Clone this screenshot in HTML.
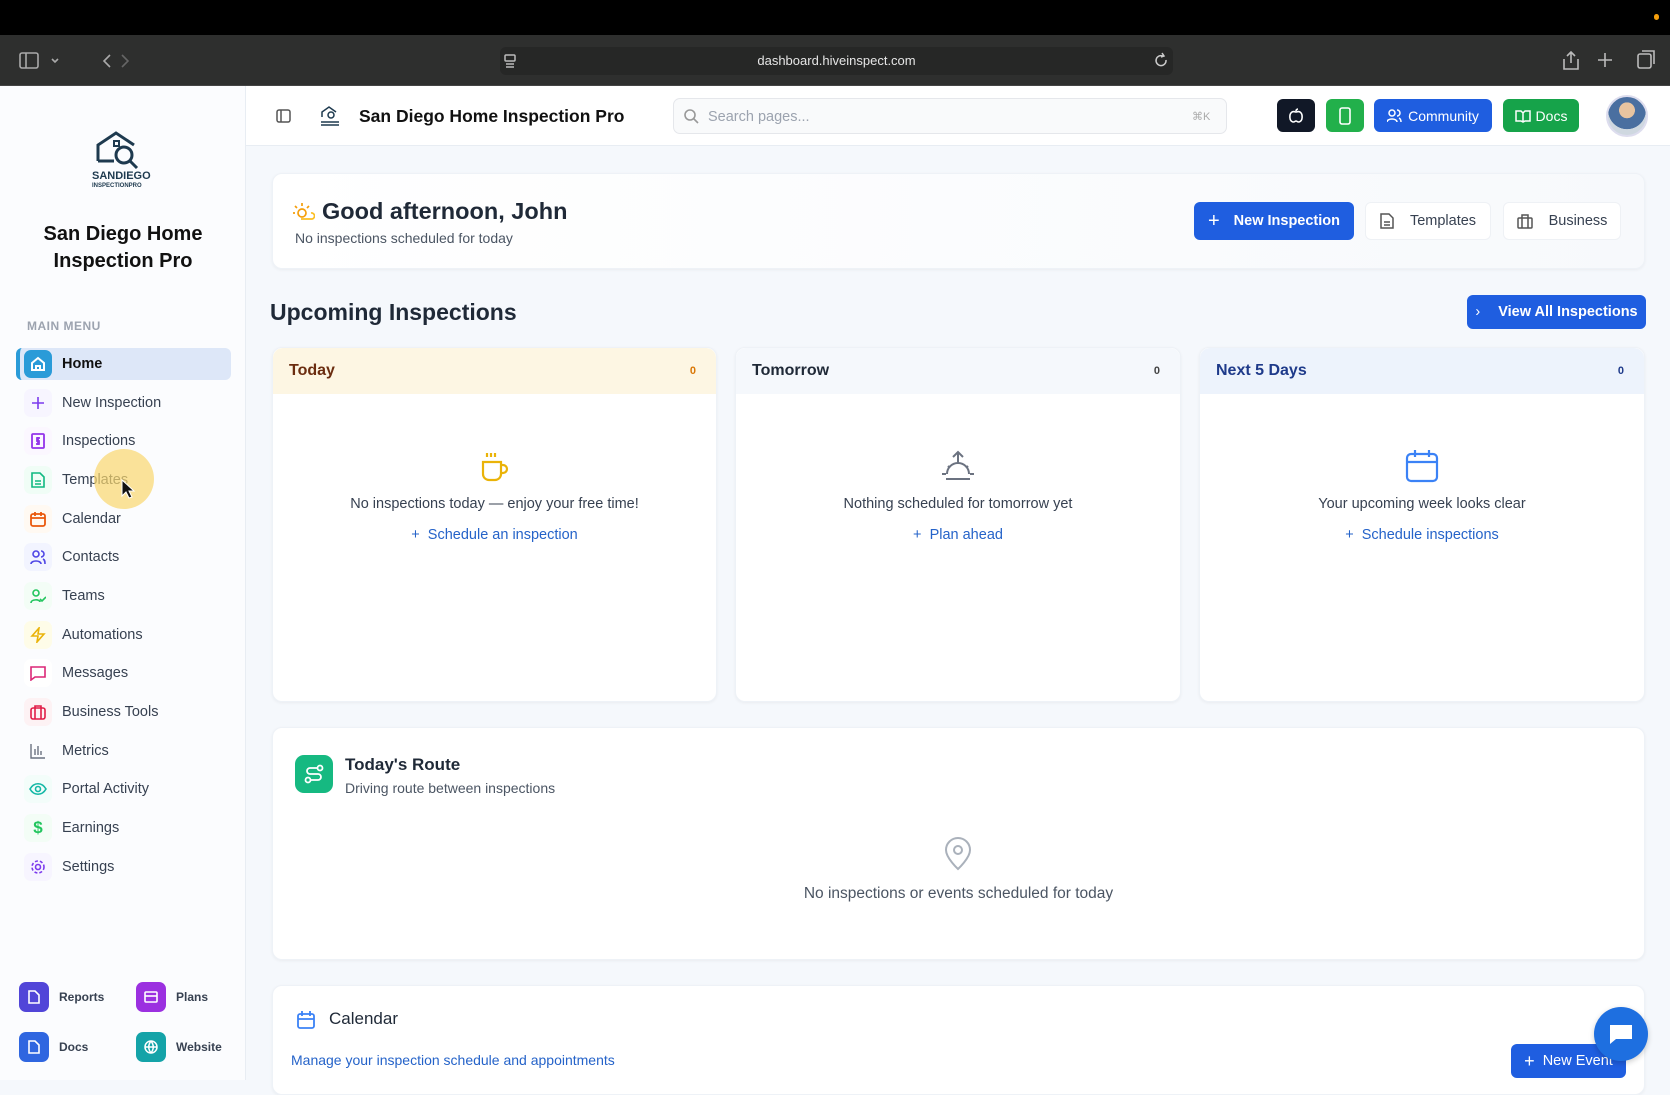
<!DOCTYPE html>
<html><head><meta charset="utf-8"><style>
*{box-sizing:border-box;margin:0;padding:0}
body{width:1670px;height:1080px;overflow:hidden;font-family:"Liberation Sans",sans-serif;background:#f5f8fc;position:relative;color:#1f2937}
.a{position:absolute}
.top{left:0;top:0;width:1670px;height:35px;background:#000}
.bar{left:0;top:35px;width:1670px;height:51px;background:#2e2f2e;border-bottom:1px solid #444}
.url{left:500px;top:47px;width:673px;height:28px;background:#262726;border-radius:6px;color:#e5e5e5;font-size:13px;text-align:center;line-height:28px}
.side{left:0;top:86px;width:246px;height:994px;background:#fbfcfe;border-right:1px solid #e8edf3}
.hdr{left:246px;top:86px;width:1424px;height:60px;background:#fff;border-bottom:1px solid #e8edf3}
.mi{left:24px;width:200px;height:34px;font-size:14.5px;color:#374151;display:flex;align-items:center}
.mi .ic{width:28px;height:28px;border-radius:7px;display:flex;align-items:center;justify-content:center;margin-right:10px}
.card{background:#fff;border-radius:10px;box-shadow:0 1px 3px rgba(0,0,0,.05);border:1px solid #eef2f7}
.btn{border-radius:6px;display:flex;align-items:center;justify-content:center;font-size:14.5px;font-weight:bold}
.blue{background:#1f5ee0;color:#fff}
.wbtn{background:#fff;color:#374151;font-weight:normal;border:1px solid #eef1f5}
.ch{height:46px;border-radius:10px 10px 0 0;display:flex;align-items:center;justify-content:space-between;padding:0 20px 0 16px;font-size:16px;font-weight:bold}
.cnt{font-size:11px;font-weight:bold}
.empty{position:absolute;width:100%;text-align:center}
.et{font-size:14.5px;color:#374151}
.el{font-size:14.5px;color:#2563c9;margin-top:15px}
.bb{width:30px;height:30px;border-radius:7px;display:flex;align-items:center;justify-content:center}
.bl{font-size:12px;font-weight:bold;color:#374151}
</style></head><body>
<div class="a top"></div>
<div class="a" style="left:1654px;top:14px;width:5px;height:6px;border-radius:3px;background:#f59e0b"></div>
<div class="a bar"></div>
<svg class="a" style="left:18px;top:50px" width="110" height="22" fill="none" stroke="#aaa" stroke-width="1.6"><rect x="2" y="3" width="18" height="15" rx="2"/><line x1="8" y1="3" x2="8" y2="18"/><path d="M34 9l3 3 3-3"/><path d="M92 5l-6 6 6 6"/></svg>
<svg class="a" style="left:118px;top:50px" width="20" height="22" fill="none" stroke="#666" stroke-width="1.6"><path d="M4 5l6 6-6 6"/></svg>
<div class="a url">dashboard.hiveinspect.com</div>
<svg class="a" style="left:503px;top:53px" width="14" height="16" fill="none" stroke="#bbb" stroke-width="1.5"><rect x="2" y="2" width="10" height="6" rx="1"/><line x1="3" y1="11" x2="11" y2="11"/><line x1="3" y1="14" x2="11" y2="14"/></svg>
<svg class="a" style="left:1154px;top:52px" width="16" height="18" fill="none" stroke="#ccc" stroke-width="1.5"><path d="M12 8a5 5 0 1 1-3-4"/><path d="M8 1l2 3-3 1"/></svg>
<svg class="a" style="left:1560px;top:48px" width="100" height="24" fill="none" stroke="#bbb" stroke-width="1.6"><path d="M11 4v11M7 8l4-4 4 4M4 11v10h14V11"/><path d="M45 5v14M38 12h14"/><rect x="78" y="6" width="13" height="14" rx="2"/><path d="M82 3h12v13"/></svg>

<div class="a side"></div>
<svg class="a" style="left:90px;top:131px" width="64" height="58" fill="none" stroke="#1e3a4f" stroke-width="3"><path d="M8 30V14L26 2l18 12"/><path d="M8 30h16"/><circle cx="34" cy="24" r="8"/><path d="M40 30l7 7"/><rect x="24" y="10" width="5" height="5" stroke-width="2"/><text x="2" y="48" font-size="11" font-weight="bold" fill="#1e3a4f" stroke="none" font-family="Liberation Sans">SANDIEGO</text><text x="2" y="56" font-size="6" font-weight="bold" fill="#1e3a4f" stroke="none" font-family="Liberation Sans">INSPECTIONPRO</text></svg>
<div class="a" style="left:0;top:221px;width:246px;text-align:center;font-size:20px;font-weight:bold;line-height:27px;color:#111">San Diego Home<br>Inspection Pro</div>
<div class="a" style="left:27px;top:319px;font-size:12px;font-weight:bold;color:#9ca3af;letter-spacing:.5px">MAIN MENU</div>
<div class="a" style="left:16px;top:348px;width:215px;height:32px;background:#dde7f8;border-radius:6px;border-left:4px solid #2a9bd8"></div>
<div class="a mi" style="top:347px"><div class="ic" style="background:#2a9bd8"><svg width="16" height="16" fill="none" stroke="#fff" stroke-width="2"><path d="M2 7l6-5 6 5v7H2z"/><path d="M6 14v-4h4v4"/></svg></div><b style="color:#111">Home</b></div>
<div class="a mi" style="top:386px"><div class="ic" style="background:#f7f5ff"><svg width="14" height="14" stroke="#7c3aed" stroke-width="1.6"><path d="M7 1v12M1 7h12"/></svg></div>New Inspection</div>
<div class="a mi" style="top:424px"><div class="ic" style="background:#fbf7ff"><svg width="14" height="16" fill="none" stroke="#9333ea" stroke-width="1.8"><rect x="1" y="1" width="12" height="14" rx="1"/><path d="M7 4v8M9 5H6v3h2v3H5"/></svg></div>Inspections</div>
<div class="a mi" style="top:463px"><div class="ic" style="background:#f0fdf6"><svg width="14" height="16" fill="none" stroke="#10b981" stroke-width="1.6"><path d="M1 1h8l4 4v10H1z"/><path d="M4 9h6M4 12h6"/></svg></div>Templates</div>
<div class="a" style="left:94px;top:449px;width:60px;height:60px;border-radius:50%;background:rgba(250,215,110,.7)"></div>
<svg class="a" style="left:120px;top:478px" width="16" height="22"><path d="M2 2v16l4-4 3 6 3-1-3-6h5z" fill="#111" stroke="#fff" stroke-width="1"/></svg>
<div class="a mi" style="top:502px"><div class="ic" style="background:#fff9f2"><svg width="16" height="16" fill="none" stroke="#ea580c" stroke-width="1.8"><rect x="1" y="3" width="14" height="12" rx="2"/><path d="M1 7h14M5 1v4M11 1v4"/></svg></div>Calendar</div>
<div class="a mi" style="top:540px"><div class="ic" style="background:#f2f4ff"><svg width="16" height="16" fill="none" stroke="#4f46e5" stroke-width="1.6"><circle cx="6" cy="5" r="3"/><path d="M1 15c0-4 10-4 10 0M11 2a3 3 0 0 1 0 6M13 10c2 1 2 3 2 5"/></svg></div>Contacts</div>
<div class="a mi" style="top:579px"><div class="ic" style="background:#f3fdf6"><svg width="16" height="16" fill="none" stroke="#22c55e" stroke-width="1.6"><circle cx="6" cy="5" r="3"/><path d="M1 15c0-4 9-4 9-1M10 11l2 2 4-4"/></svg></div>Teams</div>
<div class="a mi" style="top:618px"><div class="ic" style="background:#fefce8"><svg width="16" height="16" fill="none" stroke="#eab308" stroke-width="1.6"><path d="M9 1L2 9h6l-1 6 7-8H8z"/></svg></div>Automations</div>
<div class="a mi" style="top:656px"><div class="ic" style="background:#fff"><svg width="16" height="16" fill="none" stroke="#db2777" stroke-width="1.6"><path d="M1 2h14v10H5l-4 3z"/></svg></div>Messages</div>
<div class="a mi" style="top:695px"><div class="ic" style="background:#fdf2f4"><svg width="16" height="16" fill="none" stroke="#e11d48" stroke-width="1.6"><rect x="1" y="4" width="14" height="11" rx="2"/><path d="M5 4V2h6v2M5 4v11M11 4v11"/></svg></div>Business Tools</div>
<div class="a mi" style="top:734px"><div class="ic"><svg width="16" height="16" fill="none" stroke="#6b7280" stroke-width="1.4"><path d="M1 1v14h14M5 12V6M8 12V3M11 12V8"/></svg></div>Metrics</div>
<div class="a mi" style="top:772px"><div class="ic" style="background:#f3fdfa"><svg width="18" height="14" fill="none" stroke="#14b8a6" stroke-width="1.6"><path d="M1 7c4-7 12-7 16 0-4 7-12 7-16 0z"/><circle cx="9" cy="7" r="2.5"/></svg></div>Portal Activity</div>
<div class="a mi" style="top:811px"><div class="ic" style="background:#f3fdf6"><span style="color:#22c55e;font-weight:bold;font-size:17px">$</span></div>Earnings</div>
<div class="a mi" style="top:850px"><div class="ic" style="background:#f7f5ff"><svg width="16" height="16" fill="none" stroke="#7c3aed" stroke-width="1.6"><circle cx="8" cy="8" r="2.5"/><circle cx="8" cy="8" r="6" stroke-dasharray="3 2"/></svg></div>Settings</div>

<div class="a" style="left:19px;top:982px;display:flex;align-items:center;gap:10px"><div class="bb" style="background:#5145d8"><svg width="12" height="14" fill="none" stroke="#fff" stroke-width="1.6"><path d="M1 1h6l4 4v8H1z"/></svg></div><span class="bl">Reports</span></div>
<div class="a" style="left:136px;top:982px;display:flex;align-items:center;gap:10px"><div class="bb" style="background:#9b30e0"><svg width="14" height="12" fill="none" stroke="#fff" stroke-width="1.6"><rect x="1" y="1" width="12" height="10" rx="1"/><path d="M1 5h12"/></svg></div><span class="bl">Plans</span></div>
<div class="a" style="left:19px;top:1032px;display:flex;align-items:center;gap:10px"><div class="bb" style="background:#2f66e0"><svg width="12" height="14" fill="none" stroke="#fff" stroke-width="1.6"><path d="M1 1h6l4 4v8H1z"/></svg></div><span class="bl">Docs</span></div>
<div class="a" style="left:136px;top:1032px;display:flex;align-items:center;gap:10px"><div class="bb" style="background:#14a3a8"><svg width="14" height="14" fill="none" stroke="#fff" stroke-width="1.5"><circle cx="7" cy="7" r="6"/><path d="M1 7h12M7 1c-3 4-3 8 0 12M7 1c3 4 3 8 0 12"/></svg></div><span class="bl">Website</span></div>

<div class="a hdr"></div>
<svg class="a" style="left:276px;top:108px" width="16" height="16" fill="none" stroke="#555" stroke-width="1.5"><rect x="1" y="2" width="13" height="12" rx="2"/><path d="M5 2v12"/></svg>
<svg class="a" style="left:319px;top:106px" width="22" height="22" fill="none" stroke="#1e3a4f" stroke-width="1.5"><path d="M3 11V6l7-5 7 5"/><circle cx="12" cy="9" r="3"/><path d="M2 16h18M2 19h18"/></svg>
<div class="a" style="left:359px;top:106px;font-size:17.5px;font-weight:bold;color:#111">San Diego Home Inspection Pro</div>
<div class="a" style="left:673px;top:98px;width:554px;height:36px;border:1px solid #e5e7eb;border-radius:7px;background:#f9fafb"></div>
<svg class="a" style="left:683px;top:108px" width="16" height="16" fill="none" stroke="#999" stroke-width="1.6"><circle cx="7" cy="7" r="5"/><path d="M11 11l4 4"/></svg>
<div class="a" style="left:708px;top:109px;font-size:14.5px;color:#9ca3af">Search pages...</div>
<div class="a" style="left:1192px;top:110px;font-size:11px;color:#aaa">⌘K</div>
<div class="a btn" style="left:1277px;top:99px;width:38px;height:33px;background:#111827"><svg width="16" height="16" fill="none" stroke="#fff" stroke-width="1.6"><path d="M4 4c-3 2-3 9 1 10 2 0 2-1 3-1s1 1 3 1c4-1 4-8 1-10-2-1-3 0-4 0S6 3 4 4zM8 3c0-1 1-2 2-2"/></svg></div>
<div class="a btn" style="left:1326px;top:99px;width:38px;height:33px;background:#22b04b"><svg width="12" height="18" fill="none" stroke="#fff" stroke-width="1.6"><rect x="1" y="1" width="10" height="16" rx="2"/></svg></div>
<div class="a btn blue" style="left:1374px;top:99px;width:118px;height:33px;font-size:14px;font-weight:normal"><svg width="16" height="14" fill="none" stroke="#fff" stroke-width="1.5" style="margin-right:5px"><circle cx="5" cy="4" r="3"/><path d="M0 13c0-4 10-4 10 0M10 1a3 3 0 0 1 0 6M12 9c2 1 2 3 2 4"/></svg>Community</div>
<div class="a btn" style="left:1503px;top:99px;width:76px;height:33px;background:#16a34a;color:#fff;font-size:14px;font-weight:normal"><svg width="16" height="14" fill="none" stroke="#fff" stroke-width="1.5" style="margin-right:5px"><path d="M1 2h5l2 2 2-2h5v10h-5l-2 1-2-1H1zM8 4v9"/></svg>Docs</div>
<div class="a" style="left:1606px;top:95px;width:42px;height:42px;border-radius:50%;background:radial-gradient(circle at 50% 35%,#e8c4a0 0 25%,#4a6fa0 26% 60%,#cfd8e0 61%);border:2px solid #dde"></div>

<div class="a card" style="left:272px;top:173px;width:1373px;height:96px;background:linear-gradient(90deg,#fff,#f7f9fc)"></div>
<svg class="a" style="left:293px;top:200px" width="22" height="22" fill="none" stroke="#f59e0b" stroke-width="1.7"><circle cx="9" cy="13" r="4"/><path d="M9 3v3M2 13H0M4 8L2 6M14 8l2-2"/><path d="M8 19h11a3 3 0 0 0-1-6" stroke="#fbbf24"/></svg>
<div class="a" style="left:322px;top:198px;font-size:23.5px;font-weight:bold;color:#1f2937">Good afternoon, John</div>
<div class="a" style="left:295px;top:230px;font-size:14px;color:#4b5563">No inspections scheduled for today</div>
<div class="a btn blue" style="left:1194px;top:202px;width:160px;height:38px"><span style="font-weight:normal;font-size:20px;margin-right:14px">+</span>New Inspection</div>
<div class="a btn wbtn" style="left:1365px;top:202px;width:126px;height:38px"><svg width="14" height="16" fill="none" stroke="#555" stroke-width="1.5" style="margin-right:16px"><path d="M1 1h8l4 4v10H1z"/><path d="M4 9h6M4 12h6"/></svg>Templates</div>
<div class="a btn wbtn" style="left:1503px;top:202px;width:118px;height:38px"><svg width="16" height="15" fill="none" stroke="#555" stroke-width="1.5" style="margin-right:16px"><rect x="1" y="4" width="14" height="10" rx="1"/><path d="M5 4V1h6v3M5 4v10M11 4v10"/></svg>Business</div>

<div class="a" style="left:270px;top:299px;font-size:23px;font-weight:bold;color:#1f2937">Upcoming Inspections</div>
<div class="a btn blue" style="left:1467px;top:295px;width:179px;height:34px"><span style="font-weight:normal;margin-right:18px">›</span>View All Inspections</div>

<div class="a card" style="left:272px;top:347px;width:445px;height:355px">
<div class="ch" style="background:#fdf6e3;color:#6b2d10">Today<span class="cnt" style="color:#d97706">0</span></div>
<div class="empty" style="top:100px"><svg width="36" height="36" fill="none" stroke="#eab308" stroke-width="2.2"><path d="M6 14h18v12a6 6 0 0 1-6 6h-6a6 6 0 0 1-6-6zM24 17h2a4 4 0 0 1 0 8h-2M10 5v4M14 5v4M18 5v4"/></svg><div class="et" style="margin-top:7px">No inspections today — enjoy your free time!</div><div class="el">+&nbsp; Schedule an inspection</div></div></div>
<div class="a card" style="left:735px;top:347px;width:446px;height:355px">
<div class="ch" style="background:#f5f8fc;color:#1f2937">Tomorrow<span class="cnt" style="color:#444">0</span></div>
<div class="empty" style="top:100px"><svg width="38" height="36" fill="none" stroke="#6b7280" stroke-width="2"><path d="M19 4v12M14 9l5-5 5 5M8 26a11 11 0 0 1 22 0M3 26h4M31 26h4M7 31h24M9 18l2 2M29 18l-2 2"/></svg><div class="et" style="margin-top:7px">Nothing scheduled for tomorrow yet</div><div class="el">+&nbsp; Plan ahead</div></div></div>
<div class="a card" style="left:1199px;top:347px;width:446px;height:355px">
<div class="ch" style="background:#edf3fc;color:#1e3a8a">Next 5 Days<span class="cnt" style="color:#1e3a8a">0</span></div>
<div class="empty" style="top:100px"><svg width="36" height="36" fill="none" stroke="#3b82f6" stroke-width="2.2"><rect x="3" y="6" width="30" height="27" rx="4"/><path d="M3 14h30M11 2v7M25 2v7"/></svg><div class="et" style="margin-top:7px">Your upcoming week looks clear</div><div class="el">+&nbsp; Schedule inspections</div></div></div>

<div class="a card" style="left:272px;top:727px;width:1373px;height:233px"></div>
<div class="a" style="left:295px;top:755px;width:38px;height:38px;border-radius:9px;background:#16b981;display:flex;align-items:center;justify-content:center"><svg width="20" height="20" fill="none" stroke="#fff" stroke-width="1.8"><circle cx="4" cy="16" r="2.5"/><circle cx="16" cy="4" r="2.5"/><path d="M7 16h7a3 3 0 0 0 0-6H6a3 3 0 0 1 0-6h7"/></svg></div>
<div class="a" style="left:345px;top:755px;font-size:17px;font-weight:bold;color:#1f2937">Today's Route</div>
<div class="a" style="left:345px;top:780px;font-size:14px;color:#4b5563">Driving route between inspections</div>
<svg class="a" style="left:943px;top:837px" width="30" height="34" fill="none" stroke="#aab1bb" stroke-width="2"><path d="M15 32s12-11 12-19a12 12 0 0 0-24 0c0 8 12 19 12 19z"/><circle cx="15" cy="13" r="4"/></svg>
<div class="a" style="left:272px;top:885px;width:1373px;text-align:center;font-size:15.5px;color:#4b5563">No inspections or events scheduled for today</div>

<div class="a card" style="left:272px;top:985px;width:1373px;height:110px"></div>
<svg class="a" style="left:296px;top:1010px" width="20" height="20" fill="none" stroke="#3b82f6" stroke-width="1.8"><rect x="2" y="4" width="16" height="14" rx="2"/><path d="M2 9h16M6 1v5M14 1v5"/></svg>
<div class="a" style="left:329px;top:1009px;font-size:17px;color:#1f2937">Calendar</div>
<div class="a" style="left:291px;top:1052px;font-size:14px;color:#2563c9">Manage your inspection schedule and appointments</div>
<div class="a btn blue" style="left:1511px;top:1044px;width:115px;height:34px;font-weight:normal"><span style="font-size:18px;margin-right:8px">+</span>New Event</div>
<div class="a" style="left:1594px;top:1007px;width:54px;height:54px;border-radius:50%;background:#1e6fe0;box-shadow:0 2px 6px rgba(0,0,0,.2);display:flex;align-items:center;justify-content:center"><svg width="26" height="22" fill="#fff"><path d="M2 2h22v14H8l-6 5z"/></svg></div>
</body></html>
